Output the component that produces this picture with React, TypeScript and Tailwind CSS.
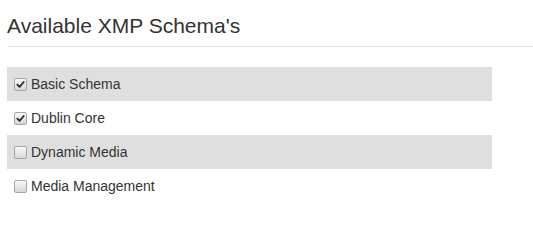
import { useState } from "react";

interface Schema {
  name: string;
  enabled: boolean;
}

const initial: Schema[] = [
  { name: "Basic Schema", enabled: true },
  { name: "Dublin Core", enabled: true },
  { name: "Dynamic Media", enabled: false },
  { name: "Media Management", enabled: false },
];

function Check({ checked }: { checked: boolean }) {
  return (
    <span className="flex h-[13px] w-[13px] shrink-0 items-center justify-center rounded-[2px] border border-[#a6a6a6] bg-gradient-to-b from-[#f8f8f8] to-[#d8d8d8]">
      {checked && (
        <svg className="h-[9px] w-[9px]" viewBox="0 0 10 10">
          <path
            d="M1.5 5.2 L4 7.6 L8.6 2.2"
            fill="none"
            stroke="#2b2b2b"
            strokeWidth={2}
            strokeLinecap="round"
            strokeLinejoin="round"
          />
        </svg>
      )}
    </span>
  );
}

export default function App() {
  const [schemas, setSchemas] = useState(initial);

  const toggle = (i: number) =>
    setSchemas((s) => s.map((x, j) => (j === i ? { ...x, enabled: !x.enabled } : x)));

  return (
    <div className="bg-white pt-[14px] pl-[7px] font-['Liberation_Sans',Arial,sans-serif] text-[#333]">
      <h3 className="mb-[9px] text-[21px] leading-[1.1] font-normal">
        Available XMP Schema's
      </h3>
      <hr className="border-0 border-t border-[#e5e5e5]" />

      <ul className="mt-[20px] w-[485px]">
        {schemas.map((s, i) => (
          <li
            key={s.name}
            className={`h-[34px] ${i % 2 === 0 ? "bg-[#dfdfdf]" : "bg-white"}`}
          >
            <label
              className="flex h-full cursor-pointer items-center gap-[4px] pl-[7px] text-[14px] leading-5"
              onClick={() => toggle(i)}
            >
              <Check checked={s.enabled} />
              {s.name}
            </label>
          </li>
        ))}
      </ul>
    </div>
  );
}
